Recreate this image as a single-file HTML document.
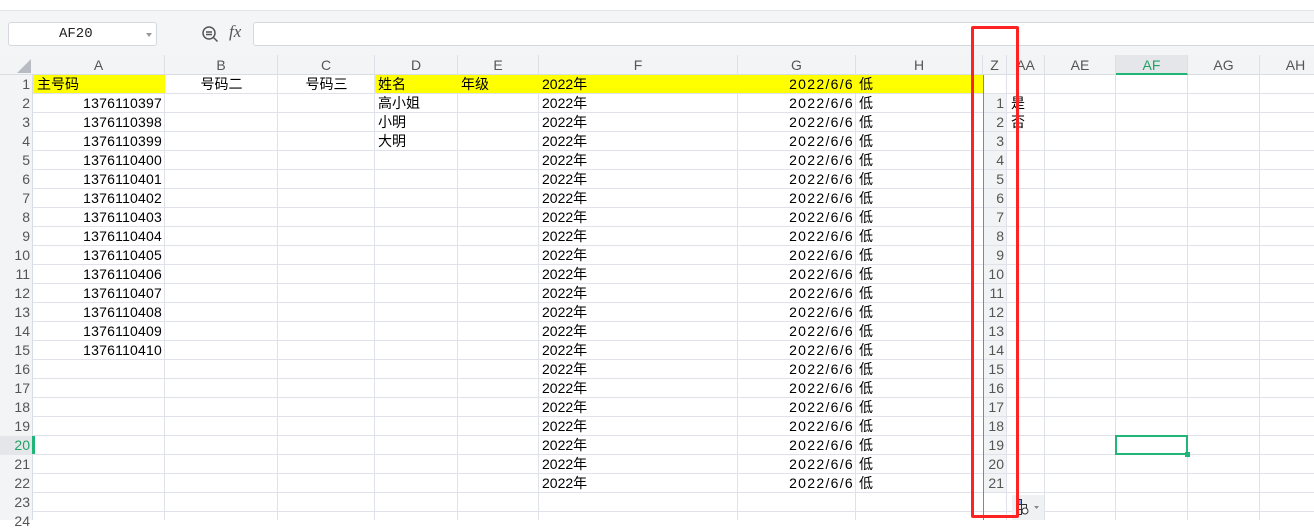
<!DOCTYPE html>
<html><head><meta charset="utf-8"><style>
*{margin:0;padding:0;box-sizing:border-box}
body{width:1314px;height:520px;overflow:hidden;background:#fff;font-family:"Liberation Sans","Noto Sans CJK SC",sans-serif;position:relative;color:#000}
.a{position:absolute}
#top{left:0;top:0;width:1314px;height:11px;background:#fff;border-bottom:1px solid #e3e5e8}
#fb{left:0;top:11px;width:1314px;height:44px;background:#f4f5f7}
#nb{left:8px;top:22px;width:149px;height:24px;background:#fff;border:1px solid #d5d8dd;border-radius:3px;font-family:"Liberation Mono",monospace;font-size:14px;line-height:22px;padding-left:50px;color:#222}
#nb:after{content:"";position:absolute;right:4px;top:10px;border:3px solid transparent;border-top:4px solid #999}
#fi{left:253px;top:22px;width:1070px;height:24px;background:#fff;border:1px solid #d5d8dd;border-radius:3px}
#fx{left:229px;top:22px;font-family:"Liberation Serif",serif;font-style:italic;font-size:17px;color:#555}
#ch{left:0;top:55px;width:1314px;height:20px;background:#f3f4f6;border-bottom:1px solid #d8dce3}
.h{position:absolute;top:55px;height:20px;font-size:14px;line-height:20px;color:#555;text-align:center;border-right:1px solid #dde0e6}
#rh{left:0;top:75px;width:33px;height:445px;background:#f3f4f6;border-right:1px solid #d8dce3}
#grid{left:33px;top:75px;width:1281px;height:445px;background:repeating-linear-gradient(to bottom,transparent 0,transparent 18px,#dfe2e8 18px,#dfe2e8 19px)}
.v{position:absolute;top:75px;width:1px;height:445px;background:#dfe2e8}
.y{position:absolute;top:75px;height:18px;background:#ffff00}
.r{position:absolute;left:0;width:1314px;height:19px;font-size:14px;line-height:19px}
.r span{position:absolute;white-space:nowrap}
.n{left:0;width:30px;text-align:right;color:#555}
.A{right:1152px;letter-spacing:0.2px}
.D{left:378px}.E{left:461px}
.F{left:542px}
.G{right:460px;letter-spacing:1.3px}
.H{left:859px}
.Z{left:984px;width:22px;text-align:right;padding-right:2px;background:#f2f3f5;color:#555;height:18px}
.AA{left:1011px}
</style></head><body>
<div class="a" id="top"></div>
<div class="a" id="fb"></div>
<div class="a" id="nb">AF20</div>
<svg class="a" style="left:201px;top:25px" width="18" height="18" viewBox="0 0 18 18"><circle cx="8" cy="8" r="6" fill="none" stroke="#555" stroke-width="1.5"/><path d="M5 7h6M5 9.5h6M12.5 12.5l4 4" stroke="#555" stroke-width="1.5"/></svg>
<div class="a" id="fx">fx</div>
<div class="a" id="fi"></div>
<div class="a" id="ch"></div>
<svg class="a" style="left:17px;top:59px" width="14" height="14"><path d="M14 0V14H0Z" fill="#b8bcc2"/></svg>
<div class="h" style="left:33px;width:132px">A</div>
<div class="h" style="left:165px;width:113px">B</div>
<div class="h" style="left:278px;width:97px">C</div>
<div class="h" style="left:375px;width:83px">D</div>
<div class="h" style="left:458px;width:81px">E</div>
<div class="h" style="left:539px;width:199px">F</div>
<div class="h" style="left:738px;width:118px">G</div>
<div class="h" style="left:856px;width:127px">H</div>
<div class="h" style="left:983px;width:24px">Z</div>
<div class="h" style="left:1007px;width:38px">AA</div>
<div class="h" style="left:1045px;width:71px">AE</div>
<div class="h" style="left:1116px;width:72px;background:#e4e6ea;color:#21a366;border-bottom:2px solid #21b577">AF</div>
<div class="h" style="left:1188px;width:72px">AG</div>
<div class="h" style="left:1260px;width:72px">AH</div>
<div class="a" id="rh"></div>
<div class="a" id="grid"></div>
<div class="v" style="left:164px"></div><div class="v" style="left:277px"></div><div class="v" style="left:374px"></div><div class="v" style="left:457px"></div><div class="v" style="left:538px"></div><div class="v" style="left:737px"></div><div class="v" style="left:855px"></div><div class="v" style="left:1006px"></div><div class="v" style="left:1044px"></div><div class="v" style="left:1115px"></div><div class="v" style="left:1187px"></div><div class="v" style="left:1259px"></div>
<div class="v" style="left:983px;background:#3fae7a"></div>
<div class="y" style="left:33px;width:132px"></div>
<div class="y" style="left:375px;width:608px"></div>
<div class="a" style="left:0;top:436px;width:33px;height:19px;background:#e4e6ea"></div>
<div class="a" style="left:32px;top:436px;width:3px;height:18px;background:#21b577"></div>
<div class="a" style="left:1115px;top:435px;width:73px;height:20px;border:2px solid #21b577"></div>
<div class="a" style="left:1185px;top:452px;width:5px;height:5px;background:#21b577"></div>

<div class="r" style="top:75px"><span class="n">1</span><span style="left:37px">主号码</span><span style="left:165px;width:113px;text-align:center">号码二</span><span style="left:278px;width:97px;text-align:center">号码三</span><span class="D">姓名</span><span class="E">年级</span><span class="F">2022年</span><span class="G">2022/6/6</span><span class="H">低</span></div>
<div class="r" style="top:94px"><span class="n">2</span><span class="A">1376110397</span><span class="D">高小姐</span><span class="F">2022年</span><span class="G">2022/6/6</span><span class="H">低</span><span class="Z">1</span><span class="AA">是</span></div>
<div class="r" style="top:113px"><span class="n">3</span><span class="A">1376110398</span><span class="D">小明</span><span class="F">2022年</span><span class="G">2022/6/6</span><span class="H">低</span><span class="Z">2</span><span class="AA">否</span></div>
<div class="r" style="top:132px"><span class="n">4</span><span class="A">1376110399</span><span class="D">大明</span><span class="F">2022年</span><span class="G">2022/6/6</span><span class="H">低</span><span class="Z">3</span></div>
<div class="r" style="top:151px"><span class="n">5</span><span class="A">1376110400</span><span class="F">2022年</span><span class="G">2022/6/6</span><span class="H">低</span><span class="Z">4</span></div>
<div class="r" style="top:170px"><span class="n">6</span><span class="A">1376110401</span><span class="F">2022年</span><span class="G">2022/6/6</span><span class="H">低</span><span class="Z">5</span></div>
<div class="r" style="top:189px"><span class="n">7</span><span class="A">1376110402</span><span class="F">2022年</span><span class="G">2022/6/6</span><span class="H">低</span><span class="Z">6</span></div>
<div class="r" style="top:208px"><span class="n">8</span><span class="A">1376110403</span><span class="F">2022年</span><span class="G">2022/6/6</span><span class="H">低</span><span class="Z">7</span></div>
<div class="r" style="top:227px"><span class="n">9</span><span class="A">1376110404</span><span class="F">2022年</span><span class="G">2022/6/6</span><span class="H">低</span><span class="Z">8</span></div>
<div class="r" style="top:246px"><span class="n">10</span><span class="A">1376110405</span><span class="F">2022年</span><span class="G">2022/6/6</span><span class="H">低</span><span class="Z">9</span></div>
<div class="r" style="top:265px"><span class="n">11</span><span class="A">1376110406</span><span class="F">2022年</span><span class="G">2022/6/6</span><span class="H">低</span><span class="Z">10</span></div>
<div class="r" style="top:284px"><span class="n">12</span><span class="A">1376110407</span><span class="F">2022年</span><span class="G">2022/6/6</span><span class="H">低</span><span class="Z">11</span></div>
<div class="r" style="top:303px"><span class="n">13</span><span class="A">1376110408</span><span class="F">2022年</span><span class="G">2022/6/6</span><span class="H">低</span><span class="Z">12</span></div>
<div class="r" style="top:322px"><span class="n">14</span><span class="A">1376110409</span><span class="F">2022年</span><span class="G">2022/6/6</span><span class="H">低</span><span class="Z">13</span></div>
<div class="r" style="top:341px"><span class="n">15</span><span class="A">1376110410</span><span class="F">2022年</span><span class="G">2022/6/6</span><span class="H">低</span><span class="Z">14</span></div>
<div class="r" style="top:360px"><span class="n">16</span><span class="F">2022年</span><span class="G">2022/6/6</span><span class="H">低</span><span class="Z">15</span></div>
<div class="r" style="top:379px"><span class="n">17</span><span class="F">2022年</span><span class="G">2022/6/6</span><span class="H">低</span><span class="Z">16</span></div>
<div class="r" style="top:398px"><span class="n">18</span><span class="F">2022年</span><span class="G">2022/6/6</span><span class="H">低</span><span class="Z">17</span></div>
<div class="r" style="top:417px"><span class="n">19</span><span class="F">2022年</span><span class="G">2022/6/6</span><span class="H">低</span><span class="Z">18</span></div>
<div class="r" style="top:436px"><span class="n" style="color:#21a366">20</span><span class="F">2022年</span><span class="G">2022/6/6</span><span class="H">低</span><span class="Z">19</span></div>
<div class="r" style="top:455px"><span class="n">21</span><span class="F">2022年</span><span class="G">2022/6/6</span><span class="H">低</span><span class="Z">20</span></div>
<div class="r" style="top:474px"><span class="n">22</span><span class="F">2022年</span><span class="G">2022/6/6</span><span class="H">低</span><span class="Z">21</span></div>
<div class="r" style="top:493px"><span class="n">23</span></div>
<div class="r" style="top:512px"><span class="n">24</span></div>

<div class="a" style="left:1012px;top:495px;width:32px;height:25px;background:#f0f1f3"></div>
<svg class="a" style="left:1015px;top:498px" width="28" height="18"><rect x="1.5" y="1.5" width="5" height="5" fill="#7aa7e6" stroke="#333"/><rect x="1.5" y="6.5" width="5" height="5" fill="none" stroke="#333"/><rect x="1.5" y="11.5" width="5" height="5" fill="none" stroke="#333"/><rect x="6.5" y="6.5" width="5" height="5" fill="none" stroke="#333"/><circle cx="10" cy="13" r="3" fill="#fff" stroke="#333"/><path d="M19 8h5l-2.5 3z" fill="#888"/></svg>
<div class="a" style="left:971px;top:26px;width:48px;height:492px;border:3px solid #f22;border-radius:2px"></div>
</body></html>
